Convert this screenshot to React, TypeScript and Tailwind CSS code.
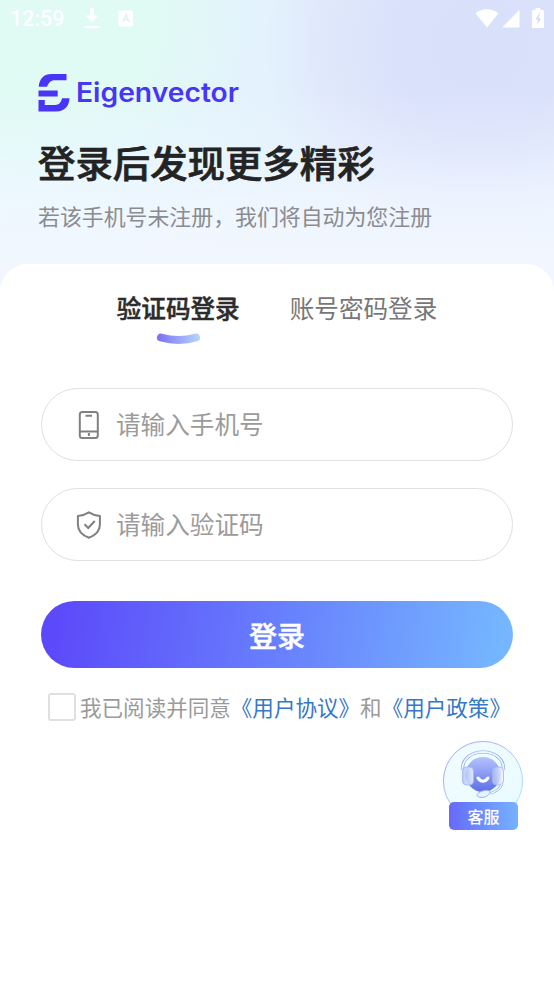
import type { ReactNode } from "react"

function StatusBar() {
  return (
    <div className="flex h-9 items-center justify-between pl-[10px] pr-[9px] text-white">
      <div className="flex items-center">
        <span className="w-[74px] pt-[2px] font-['Roboto',sans-serif] text-[21.500px] font-medium leading-[34px]">12:59</span>
        <svg width="16" height="21" viewBox="0 0 16 21" fill="currentColor">
          <path d="M6 0h4v7.500h4.100L8 14.500 1.500 7.500H6zM.5 18h15v2.200H.5z" />
        </svg>
        <svg className="ml-[18px]" width="16" height="17" viewBox="0 0 16 17">
          <rect x="0.5" y="0.5" width="14.500" height="16" rx="2" fill="currentColor" />
          <path d="M5 12 8 4.500 11 12M6 9.500h4" fill="none" stroke="#dcf5f2" strokeWidth="1.400" />
        </svg>
      </div>
      <div className="flex items-center">
        <svg width="24" height="19" viewBox="0 0 24 19" fill="currentColor">
          <path d="M.5 4.200C7-1 17-1 23.500 4.200L12 18.600z" />
        </svg>
        <svg className="ml-[3px] mr-[1px]" width="18" height="19" viewBox="0 0 18 19" fill="currentColor">
          <path d="M17.500.8v17.800H0z" />
        </svg>
        <svg className="ml-[11px] mr-[1px]" width="12" height="20" viewBox="0 0 12 20">
          <path d="M3.500 0h5v2H11q1 0 1 1v16q0 1-1 1H1q-1 0-1-1V3q0-1 1-1h2.500z" fill="currentColor" />
          <path d="M7.500 5 3.500 11.500H6L5 17l4-6.500H6.500L8 5z" fill="#d3daf6" />
        </svg>
      </div>
    </div>
  )
}

function Logo() {
  return (
    <div className="flex items-start text-[#4935f5]">
      <svg width="33" height="39" viewBox="0 0 33 39" fill="currentColor">
        <path d="M28.500 1v6.300H16.500c-3.500 0-6 2.700-7.500 6.400H.7C1.500 5.500 6 1 13.500 1zM.5 17.600h19.200v5.800H.5zM.5 27h6.300v5H17c4 0 6-2.300 7-6.700h7.500c-.5 8.500-5.500 13.200-13 13.200H.5z" />
      </svg>
      <svg className="ml-[5px] overflow-visible" width="166" height="39" viewBox="0 0 166 39">
        <text
          x="0"
          y="29.200"
          textLength="163"
          lengthAdjust="spacingAndGlyphs"
          fill="currentColor"
          className="font-['Inter',sans-serif] text-[26.500px] font-semibold"
        >
          Eigenvector
        </text>
      </svg>
    </div>
  )
}

function PhoneIcon() {
  return (
    <svg width="26" height="30" viewBox="0 0 26 30" fill="none" stroke="#808080" strokeWidth="2">
      <rect x="3.800" y="2" width="18" height="26" rx="2.500" />
      <path d="M9.500 5.800h6.500M4 21.500h18M12.900 23v3" />
    </svg>
  )
}

function ShieldIcon() {
  return (
    <svg width="26" height="30" viewBox="0 0 26 30" fill="none" stroke="#808080" strokeWidth="2">
      <path
        d="M12.900 2.300c3.200 2 7 3.300 11 3.700v8.500c0 6.500-4.500 10.800-11 13.200-6.500-2.400-11-6.700-11-13.200V6c4-.4 7.800-1.700 11-3.700z"
        strokeLinejoin="round"
      />
      <path d="m8.500 14.300 3.700 3.700 6.600-7" />
    </svg>
  )
}

function Field({ icon, placeholder }: { icon: ReactNode; placeholder: string }) {
  return (
    <label className="flex h-[73px] items-center rounded-full border border-[#dfdfdf] pl-[34px]">
      {icon}
      <input
        className="mb-[2px] ml-[14px] w-[340px] bg-transparent text-[24.600px] outline-none placeholder:text-[#9b9b9b]"
        placeholder={placeholder}
      />
    </label>
  )
}

function Service() {
  return (
    <div className="absolute left-[442px] top-[740px] h-[90px] w-[82px]">
      <svg width="82" height="82" viewBox="0 0 82 82" fill="none">
        <defs>
          <linearGradient id="ring" x1="0" y1="0" x2="1" y2="1">
            <stop offset="0" stopColor="#a29fea" />
            <stop offset="1" stopColor="#b8eaff" />
          </linearGradient>
          <linearGradient id="disc" x1="0" y1="0" x2="1" y2="1">
            <stop offset="0" stopColor="#f3fbff" />
            <stop offset="1" stopColor="#e8fcff" />
          </linearGradient>
          <linearGradient id="face" x1="0" y1="0" x2="0" y2="1">
            <stop offset="0" stopColor="#b5c3fc" />
            <stop offset="1" stopColor="#5b6ee8" />
          </linearGradient>
          <linearGradient id="ear" x1="0" y1="0" x2="1" y2="0">
            <stop offset="0" stopColor="#a9bdf8" stopOpacity=".8" />
            <stop offset="1" stopColor="#f3f7ff" stopOpacity=".85" />
          </linearGradient>
        </defs>
        <circle cx="41" cy="41" r="39.600" fill="url(#disc)" stroke="url(#ring)" />
        <circle cx="41" cy="34.500" r="17.500" fill="url(#face)" />
        <path d="M20.500 30C19 6 63 6 61.500 30" stroke="#8ba9e8" strokeWidth="3.200" />
        <path d="M20.500 30C19 6 63 6 61.500 30" stroke="#e8f4ff" strokeWidth="1.800" />
        <rect x="20.500" y="27" width="11" height="18" rx="4" fill="url(#ear)" stroke="#9cb5ee" strokeWidth=".8" />
        <rect x="50.500" y="27" width="11" height="18" rx="4" fill="url(#ear)" stroke="#9cb5ee" strokeWidth=".8" />
        <path d="M60 44q-3 7-12 9.500" stroke="#9ab6ed" strokeWidth="2.600" />
        <path d="M60 44q-3 7-12 9.500" stroke="#edf8ff" strokeWidth="1.200" />
        <path
          d="M40 57.500c-3 0-5-1-5-2.500s3-3.500 7-4.500c3-.6 6-.2 6 1.300 0 2.500-4 5.700-8 5.700z"
          fill="#e4f1ff"
          stroke="#91aee9"
          strokeWidth=".9"
        />
        <path d="M36 38q5 6.500 10 0" stroke="#fff" strokeWidth="3" strokeLinecap="round" />
      </svg>
      <button className="absolute bottom-0 left-[7px] flex h-[28px] w-[69px] items-center justify-center rounded-[5px] bg-gradient-to-r from-[#6669fb] to-[#76b1ff] text-[16px] font-medium text-white">
        客服
      </button>
    </div>
  )
}

export default function App() {
  return (
    <div
      lang="zh-CN"
      className="relative flex h-[984px] w-[554px] flex-col overflow-hidden bg-[#f2f7ff] bg-[linear-gradient(180deg,#f2f7ff00_90px,#f2f7ff44_150px,#f2f7ffbb_205px,#f2f7ff_265px),radial-gradient(circle_at_480px_45px,#d9e0fa_0,#dae1fb_85px,#dde5fb_125px,#e0e8fb_155px,#e2ebfb00_215px),radial-gradient(ellipse_230px_160px_at_20px_20px,#e0faf4_0,#e0faf4_60%,#e1f9f600_100%),linear-gradient(90deg,#e3fbfd_0,#e4f4fc_200px,#e2f0fc_350px)] bg-[length:554px_300px] bg-no-repeat font-['Noto_Sans_CJK_SC',sans-serif]"
    >
      <StatusBar />
      <header className="h-[228px] pl-[38px] pt-[37px]">
        <Logo />
        <h1 className="mt-[26px] text-[37.400px] font-medium leading-[48px] text-[#232323] [-webkit-text-stroke:0.700px_#232323]">
          登录后发现更多精彩
        </h1>
        <p className="mt-[15px] text-[21.900px] leading-[30px] text-[#8a8c8f]">若该手机号未注册，我们将自动为您注册</p>
      </header>
      <main className="flex-1 rounded-t-[28px] bg-white px-[41px] pt-[25px]">
        <div className="flex justify-center gap-[50px] text-[24.600px] leading-9">
          <button className="flex h-[62px] flex-col items-center font-medium text-[#2c2c2c] [-webkit-text-stroke:0.500px_#2c2c2c]">
            验证码登录
            <svg className="mt-[6px]" width="46" height="14" viewBox="0 0 46 14" fill="none">
              <defs>
                <linearGradient id="smile" x1="1" y1="0" x2="45" y2="0" gradientUnits="userSpaceOnUse">
                  <stop stopColor="#7a6df5" />
                  <stop offset="1" stopColor="#b5d7fb" />
                </linearGradient>
              </defs>
              <path d="M6 6.500q17.500 5 35 0" stroke="url(#smile)" strokeWidth="8" strokeLinecap="round" />
            </svg>
          </button>
          <button className="h-9 text-[#777]">账号密码登录</button>
        </div>
        <form className="mt-[37px] flex flex-col gap-[27px]">
          <Field icon={<PhoneIcon />} placeholder="请输入手机号" />
          <Field icon={<ShieldIcon />} placeholder="请输入验证码" />
          <button
            type="button"
            className="mt-[13px] h-[67px] rounded-full bg-[linear-gradient(98deg,#5c49fa_3%,#6679fc_45%,#75b6ff_97%)] text-[28px] font-medium text-white [-webkit-text-stroke:0.500px_#fff]"
          >
            登录
          </button>
        </form>
        <div className="mt-[25px] flex items-center whitespace-nowrap pl-[7px] text-[21.550px] leading-[28px] text-[#9a9a9a]">
          <span className="mr-[4px] h-[28px] w-[28px] shrink-0 rounded-[3px] border-2 border-[#e0e0e0]" />
          <span>我已阅读并同意</span>
          <a className="text-[#3478c7]">《用户协议》</a>
          <span>和</span>
          <a className="text-[#3478c7]">《用户政策》</a>
        </div>
      </main>
      <Service />
    </div>
  )
}
